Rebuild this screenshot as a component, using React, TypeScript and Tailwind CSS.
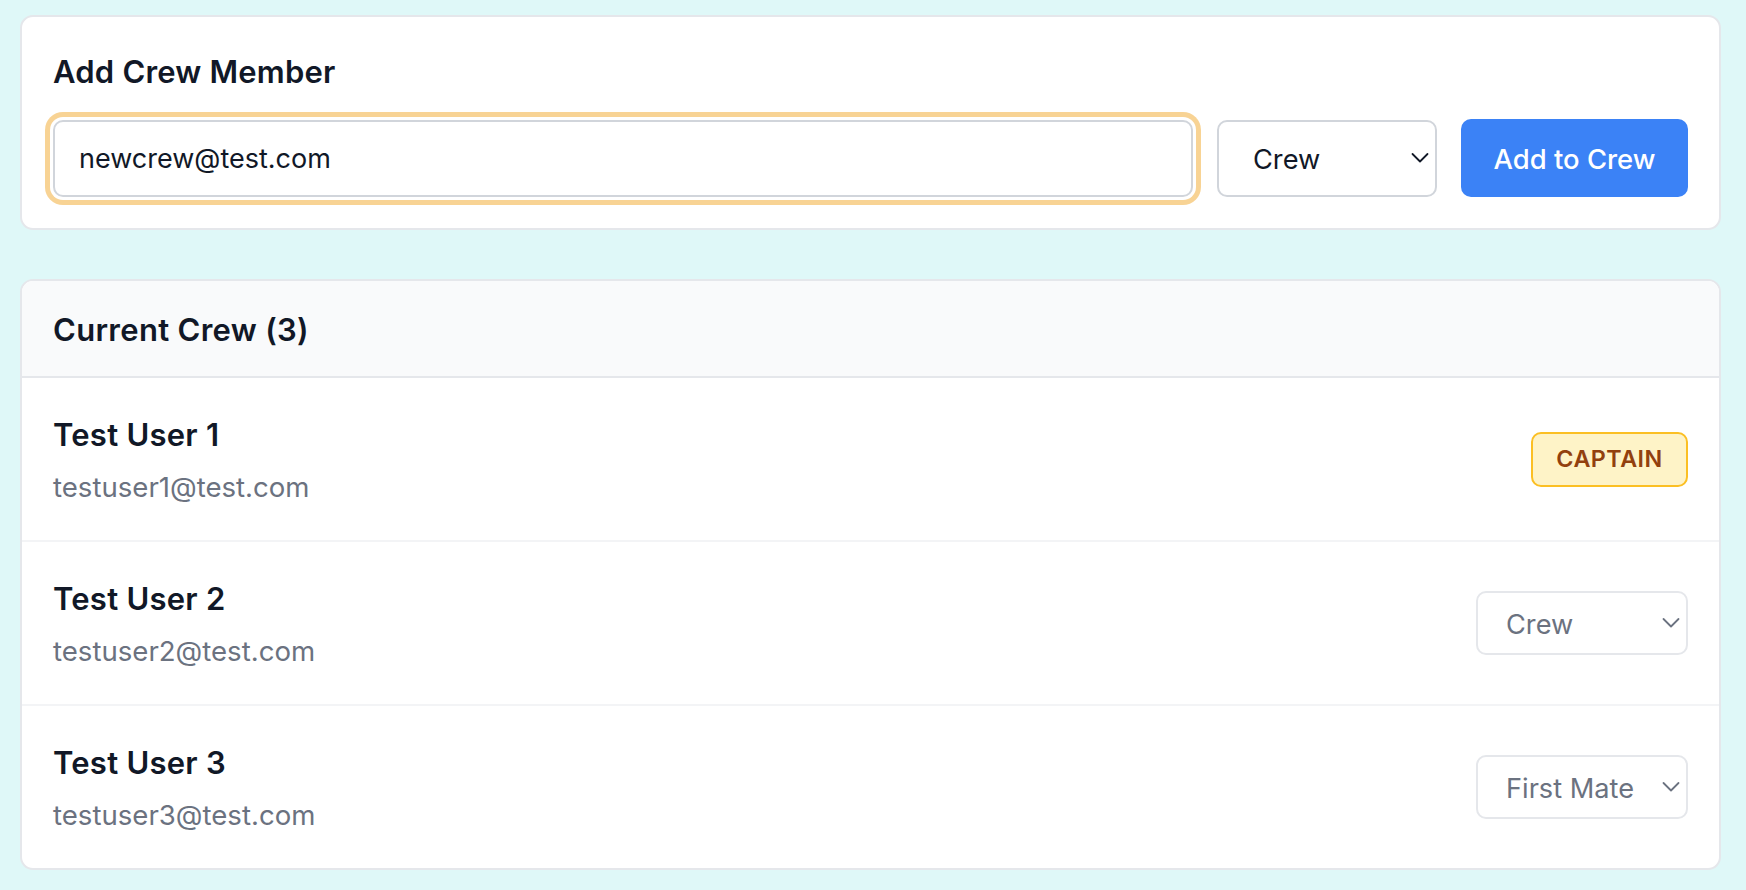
import React from "react";

type Member = { name: string; email: string; role: "captain" | "Crew" | "First Mate" };

const members: Member[] = [
  { name: "Test User 1", email: "testuser1@test.com", role: "captain" },
  { name: "Test User 2", email: "testuser2@test.com", role: "Crew" },
  { name: "Test User 3", email: "testuser3@test.com", role: "First Mate" },
];

function Chevron({ color }: { color: string }) {
  return (
    <svg
      width="18"
      height="11"
      viewBox="0 0 18 11"
      fill="none"
      className="pointer-events-none absolute right-[8px] top-1/2 -translate-y-1/2"
    >
      <path d="M1.5 1.5 L9 9 L16.5 1.5" stroke={color} strokeWidth="1.8" strokeLinecap="round" strokeLinejoin="round" />
    </svg>
  );
}

function RoleSelect({ value }: { value: string }) {
  return (
    <div className="relative w-[212px] h-[64px]">
      <select
        defaultValue={value}
        className="appearance-none w-full h-full rounded-[10px] border-2 border-[#e5e7eb] bg-white pl-[28px] pr-[32px] pt-[4px] text-[27.2px] text-[#6b7280] outline-none"
      >
        <option value="Crew">Crew</option>
        <option value="First Mate">First Mate</option>
      </select>
      <Chevron color="#6b7280" />
    </div>
  );
}

export default function App() {
  return (
    <div className="min-h-[890px] w-full bg-[#dff8f8] pt-[15px] pl-[20px] font-[Inter,'Noto_Sans',sans-serif]">
      <div className="w-[1701px] flex flex-col gap-[49px]">
        {/* Add Crew Member card */}
        <div className="rounded-[13px] border-2 border-[#e5e7eb] bg-white px-[31px] pt-[31px] pb-[31px]">
          <h2 className="text-[31px] leading-[47px] tracking-[0.2px] font-semibold text-[#111827]">Add Crew Member</h2>
          <div className="mt-[24px] flex items-center gap-[24px]">
            <input
              type="email"
              defaultValue="newcrew@test.com"
              className="flex-1 h-[77px] rounded-[10px] border-2 border-[#d1d5db] bg-white px-[24px] text-[27px] text-[#111827] outline-none shadow-[0_0_0_3px_#ffffff,0_0_0_8px_#f8d394]"
            />
            <div className="relative w-[220px] h-[77px]">
              <select
                defaultValue="Crew"
                className="appearance-none w-full h-full rounded-[10px] border-2 border-[#d1d5db] bg-white pl-[34px] pr-[32px] pt-[4px] text-[27.2px] text-[#111827] outline-none"
              >
                <option value="Crew">Crew</option>
                <option value="First Mate">First Mate</option>
              </select>
              <Chevron color="#111827" />
            </div>
            <button className="w-[227px] h-[78px] rounded-[10px] bg-[#3b82f6] pt-[4px] text-[27.4px] font-medium text-white">
              Add to Crew
            </button>
          </div>
        </div>

        {/* Current Crew card */}
        <div className="overflow-hidden rounded-[13px] border-2 border-[#e5e7eb] bg-white">
          <div className="flex h-[97px] items-center border-b-2 border-[#e5e7eb] bg-[#f9fafb] px-[31px] pt-[2px]">
            <h2 className="text-[31px] leading-[47px] tracking-[0.3px] font-semibold text-[#111827]">Current Crew (3)</h2>
          </div>
          {members.map((m, i) => (
            <div
              key={m.email}
              className={
                i < members.length - 1
                  ? "flex items-center justify-between border-b-2 border-[#f3f4f6] px-[31px] py-[33px]"
                  : "flex items-center justify-between px-[31px] py-[33px]"
              }
            >
              <div className="flex flex-col">
                <div className="text-[31px] leading-[47px] tracking-[0.25px] font-semibold text-[#111827]">{m.name}</div>
                <div className="mt-[9px] text-[27.6px] leading-[40px] text-[#6b7280]">{m.email}</div>
              </div>
              {m.role === "captain" ? (
                <span className="flex h-[55px] w-[157px] items-center justify-center rounded-[10px] border-2 border-[#fbbf24] bg-[#fef3c7] text-[23.3px] font-semibold tracking-[0.02em] text-[#92400e]">
                  CAPTAIN
                </span>
              ) : (
                <RoleSelect value={m.role} />
              )}
            </div>
          ))}
        </div>
      </div>
    </div>
  );
}
